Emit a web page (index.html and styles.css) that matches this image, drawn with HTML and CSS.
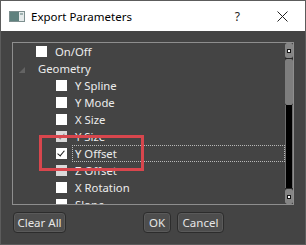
FILE: index.html
```html
<!DOCTYPE html>
<html lang="en">
<head>
    <meta charset="UTF-8">
    <title>Export Parameters</title>
    <link rel="stylesheet" href="styles.css">
</head>
<body>
    <div class="window">
        <div class="titlebar">
            <svg class="app-icon" width="16" height="11" viewBox="0 0 16 11">
                <rect x="0.5" y="0.5" width="15" height="10" fill="#e4eaea" stroke="#7d8f8f"/>
                <rect x="1" y="1" width="9" height="9" fill="#5f817e"/>
                <rect x="11" y="2" width="3" height="2" fill="#9fb2b1"/>
            </svg>
            <span class="title">Export Parameters</span>
            <span class="help">?</span>
            <svg class="close" width="11" height="11" viewBox="0 0 11 11">
                <path d="M0.5 0.5 L10.5 10.5 M10.5 0.5 L0.5 10.5" stroke="#222" stroke-width="1"/>
            </svg>
        </div>

        <div class="content">
            <div class="listbox">
                <div class="items">
                    <div class="row top"><span class="box"></span><span class="label">On/Off</span></div>
                    <div class="row branch"><span class="arrow"></span><span class="label">Geometry</span></div>
                    <div class="row child"><span class="box"></span><span class="label">Y Spline</span></div>
                    <div class="row child"><span class="box"></span><span class="label">Y Mode</span></div>
                    <div class="row child"><span class="box"></span><span class="label">X Size</span></div>
                    <div class="row child"><span class="box dim checked"></span><span class="label">Y Size</span></div>
                    <div class="row child"><span class="box checked"></span><span class="label focus">Y Offset</span></div>
                    <div class="row child"><span class="box dim"></span><span class="label">Z Offset</span></div>
                    <div class="row child"><span class="box"></span><span class="label">X Rotation</span></div>
                    <div class="row child"><span class="box"></span><span class="label">Slope</span></div>
                </div>
                <div class="scrollbar">
                    <div class="sb-btn"><span class="sb-dot"></span></div>
                    <div class="sb-thumb"></div>
                    <div class="sb-track"></div>
                    <div class="sb-btn bottom"><span class="sb-dot"></span></div>
                </div>
            </div>

            <div class="buttons">
                <button class="clear">Clear All</button>
                <button class="ok">OK</button>
                <button class="cancel">Cancel</button>
            </div>
        </div>

        <div class="callout"></div>
    </div>
</body>
</html>
```

FILE: styles.css
```css
html, body {
    margin: 0;
    padding: 0;
    background: #444444;
}
.window {
    position: relative;
    width: 306px;
    height: 245px;
    box-sizing: border-box;
    border: 1px solid #5c5c5c;
    background: #444444;
    font-family: "Noto Sans", "Open Sans", sans-serif;
    overflow: hidden;
}
.titlebar {
    height: 30px;
    background: #ffffff;
    display: flex;
    align-items: center;
    color: #000;
    font-size: 11.5px;
}
.app-icon {
    margin-left: 8px;
    margin-top: 1px;
}
.title {
    margin-left: 6px;
    flex: 1;
}
.help {
    font-size: 12px;
    color: #222;
    margin-right: 37px;
}
.close {
    margin-right: 17px;
}
.content {
    padding: 11px 11px 0 11px;
}
.listbox {
    height: 163px;
    box-sizing: border-box;
    border: 1px solid #8e8e8e;
    display: flex;
    overflow: hidden;
}
.items {
    flex: 1;
    color: #ececec;
    font-size: 11.3px;
}
.row {
    height: 17px;
    display: flex;
    align-items: center;
}
.row.top {
    padding-left: 23px;
}
.row.branch {
    padding-left: 6px;
}
.row.child {
    padding-left: 43px;
}
.box {
    width: 11px;
    height: 11px;
    background: #ffffff;
    margin-right: 5px;
    flex: none;
    position: relative;
}
.box.dim {
    background: #d9d9d9;
}
.box.checked::after {
    content: "";
    position: absolute;
    left: 3px;
    top: 1px;
    width: 3px;
    height: 6px;
    border: solid #1a1a1a;
    border-width: 0 1.5px 1.5px 0;
    transform: rotate(40deg);
}
.box.dim.checked::after {
    border-color: #8a8a8a;
}
.arrow {
    width: 0;
    height: 0;
    border-left: 6px solid transparent;
    border-bottom: 6px solid #636363;
    margin-right: 10px;
    margin-top: 2px;
}
.label {
    flex: 1;
    padding: 0 2px;
    line-height: 15px;
    border: 1px solid transparent;
}
.label.focus {
    border: 1px dotted #b8b8b8;
}
.scrollbar {
    width: 8px;
    display: flex;
    flex-direction: column;
    background: #2a2a2a;
}
.sb-btn {
    height: 15px;
    background: #858585;
    border-radius: 2px;
    display: flex;
    align-items: center;
    justify-content: center;
    flex: none;
}
.sb-btn.bottom {
    margin-top: 1px;
}
.sb-dot {
    width: 2px;
    height: 2px;
    background: #fff;
    border: 1px solid #111;
}
.sb-thumb {
    height: 46px;
    margin-top: 1px;
    background: #7e7e7e;
    border-radius: 2px;
    flex: none;
}
.sb-track {
    flex: 1;
    background: #000;
    border-left: 1px solid #6c6c6c;
    border-right: 1px solid #6c6c6c;
}
.buttons {
    display: flex;
    margin-top: 7px;
    padding-left: 1px;
}
button {
    height: 21px;
    padding: 0;
    border: 1px solid #2c2c2c;
    border-radius: 4px;
    background: #4d4d4d;
    color: #e6e6e6;
    font-family: "Noto Sans", "Open Sans", sans-serif;
    font-size: 11.5px;
    box-shadow: inset 0 0 0 1px #5a5a5a;
}
button.clear {
    width: 53px;
}
button.ok {
    width: 28px;
    margin-left: 77px;
}
button.cancel {
    width: 47px;
    margin-left: 6px;
}
.callout {
    position: absolute;
    left: 38px;
    top: 134px;
    width: 105px;
    height: 36px;
    box-sizing: border-box;
    border: 3px solid #d8464d;
}
```
